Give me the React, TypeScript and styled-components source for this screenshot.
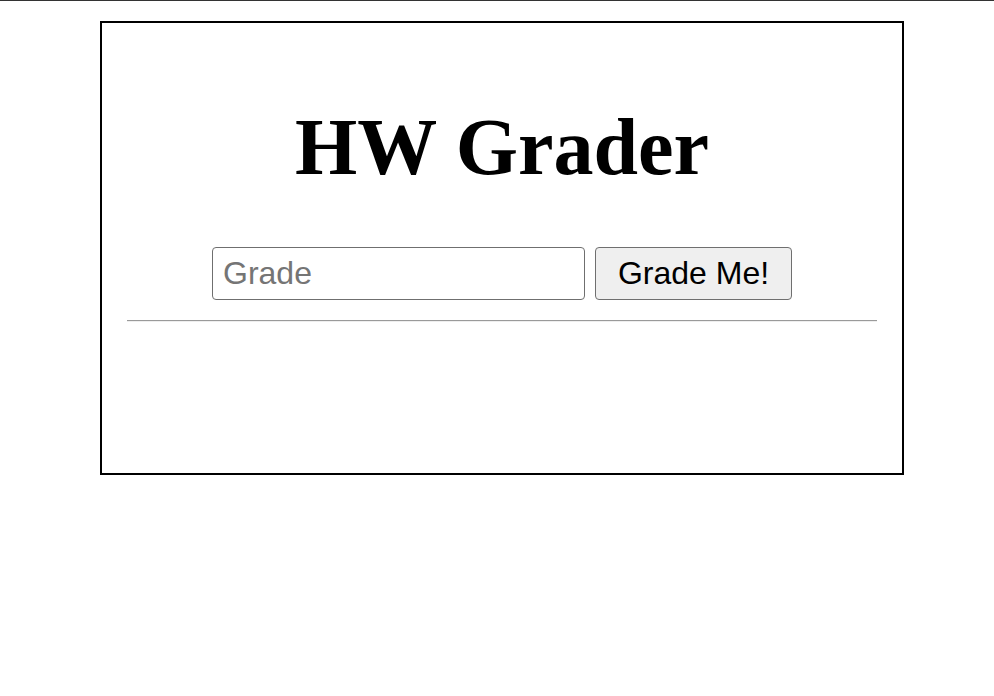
import React from "react";
import styled, { createGlobalStyle } from "styled-components";

const Global = createGlobalStyle`
  html, body { margin: 0; padding: 0; background: #fff; }
  body { font-family: "Liberation Serif", "Times New Roman", serif; }
`;

const Page = styled.div`
  border-top: 1px solid #333;
  padding-top: 20px;
  min-height: 695px;
  box-sizing: border-box;
`;

const Card = styled.div`
  margin-left: 100px;
  width: 804px;
  height: 454px;
  box-sizing: border-box;
  border: 2px solid #000;
  padding: 0 25px;
  display: flex;
  flex-direction: column;
  align-items: stretch;
`;

const Title = styled.h1`
  margin: 78px 0 0;
  font-family: "Liberation Serif", "Times New Roman", serif;
  font-weight: bold;
  font-size: 80px;
  line-height: 92px;
  text-align: center;
  color: #000;
`;

const Form = styled.form`
  display: flex;
  justify-content: center;
  gap: 10px;
  margin-top: 54px;
`;

const Input = styled.input`
  width: 373px;
  height: 53px;
  box-sizing: border-box;
  border: 1px solid #6f6f6f;
  border-radius: 4px;
  padding: 0 10px;
  font-family: "Liberation Sans", Arial, sans-serif;
  font-size: 32px;
  color: #000;
  background: #fff;
  outline: none;
  &::placeholder { color: #757575; }
`;

const Button = styled.button`
  width: 197px;
  height: 53px;
  box-sizing: border-box;
  border: 1px solid #6f6f6f;
  border-radius: 4px;
  background: #efefef;
  font-family: "Liberation Sans", Arial, sans-serif;
  font-size: 32px;
  color: #000;
  padding: 0;
  cursor: pointer;
`;

const Rule = styled.hr`
  margin: 20px 0 0;
  border: none;
  border-top: 1px solid #9a9a9a;
  border-bottom: 1px solid #eee;
  height: 0;
`;

export default function App() {
  return (
    <>
      <Global />
      <Page>
        <Card>
          <Title>HW Grader</Title>
          <Form onSubmit={(e) => e.preventDefault()}>
            <Input type="text" placeholder="Grade" />
            <Button type="submit">Grade Me!</Button>
          </Form>
          <Rule />
        </Card>
      </Page>
    </>
  );
}
